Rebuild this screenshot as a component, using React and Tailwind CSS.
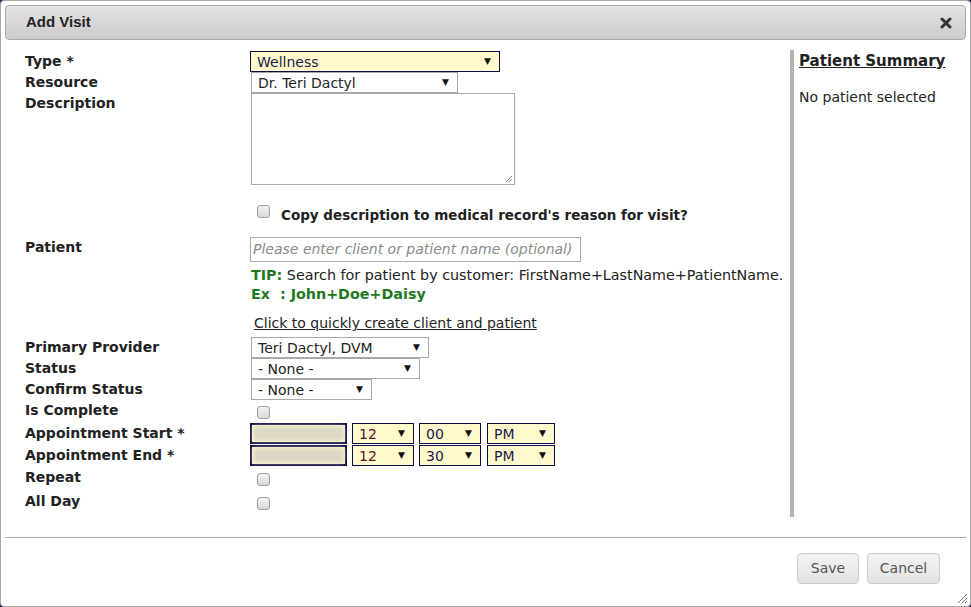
import React from "react";

const font = { fontFamily: '"DejaVu Sans", Verdana, sans-serif' };

function Select({ value, width, yellow, textClass = "" }) {
  return (
    <div
      className={
        "flex items-center justify-between h-[21px] pl-[6px] pr-[8px] text-[14px] leading-none " +
        (yellow
          ? "bg-[#fff9cc] border border-[#0b0b45] text-[#1b1b4f]"
          : "bg-white border border-[#a9a9a9] text-[#222]")
      }
      style={{ width }}
    >
      <span className={textClass}>{value}</span>
      <span className="text-[9px] text-[#111]">▼</span>
    </div>
  );
}

function Check() {
  return (
    <div className="w-[13px] h-[13px] rounded-[3px] border border-[#a0a0a0] bg-gradient-to-b from-[#f2f2f2] to-[#d9d9d9]" />
  );
}

function Row({ label, children, className = "items-center", h }) {
  return (
    <div className={"flex " + className} style={{ height: h }}>
      <div className="w-[225px] shrink-0 font-bold text-[14px] text-[#222] leading-[20px] pb-[2px] whitespace-nowrap">
        {label}
      </div>
      <div className="flex-1">{children}</div>
    </div>
  );
}

function DateBox() {
  return (
    <div className="w-[97px] h-[21px] bg-[#fff9cc] border-2 border-[#0b0b45] flex items-center p-[1px]">
      <div className="w-full h-full bg-[#dcd8c4] blur-[2px]" />
    </div>
  );
}

function TimeRow({ min }) {
  return (
    <div className="flex gap-[5px]">
      <DateBox />
      <Select value="12" width={62} yellow textClass="text-[#5a1030]" />
      <Select value={min} width={62} yellow />
      <div className="ml-[1px]">
        <Select value="PM" width={68} yellow />
      </div>
    </div>
  );
}

export default function App() {
  return (
    <div className="w-[971px] h-[607px] bg-[#1c2654]" style={font}>
      <div className="w-[971px] h-[607px] bg-white border border-[#a6a6a6] rounded-[4px] flex flex-col relative">
        {/* title bar */}
        <div className="mx-[4px] mt-[4px] h-[35px] rounded-[4px] border border-[#aaaaaa] bg-gradient-to-b from-[#e4e4e4] to-[#cbcbcb] flex items-center justify-between pl-[20px] pr-[13px]">
          <span className="font-bold text-[15px] text-[#222]" style={{ fontFamily: '"Liberation Sans", Arial, sans-serif' }}>
            Add Visit
          </span>
          <svg width="12" height="12" viewBox="0 0 12 12">
            <path d="M2 2 L10 10 M10 2 L2 10" stroke="#333" strokeWidth="3" strokeLinecap="round" />
          </svg>
        </div>

        {/* body */}
        <div className="flex mt-[10px] h-[467px]">
          <div className="w-[789px] pl-[24px] pt-[1px] flex flex-col">
            <Row label="Type *" h={21}>
              <Select value="Wellness" width={250} yellow />
            </Row>
            <Row label="Resource" h={21}>
              <div className="pl-[1px]">
                <Select value="Dr. Teri Dactyl" width={207} />
              </div>
            </Row>
            <Row label="Description" className="items-start" h={92}>
              <div className="pl-[1px]">
                <div className="w-[264px] h-[92px] border border-[#a9a9a9] relative">
                  <svg className="absolute right-[1px] bottom-[1px]" width="8" height="8" viewBox="0 0 8 8">
                    <path d="M7 1 L1 7 M7 4 L4 7" stroke="#888" strokeWidth="1" />
                  </svg>
                </div>
              </div>
            </Row>
            <div className="flex items-start h-[27px] mt-[20px] pl-[232px] gap-[11px]">
              <Check />
              <span className="font-bold text-[13.5px] leading-[20px] text-[#222]">
                Copy description to medical record's reason for visit?
              </span>
            </div>
            <Row label="Patient" className="items-start mt-[5px]" h={25}>
              <div className="w-[331px] h-[25px] border border-[#a9a9a9] flex items-center pl-[2px] text-[14px] italic text-[#8a8a8a] overflow-hidden whitespace-nowrap">
                Please enter client or patient name (optional)
              </div>
            </Row>
            <div className="pl-[226px] mt-[4px] text-[14.3px] leading-[19px]">
              <div className="text-[#222] whitespace-nowrap">
                <span className="font-bold text-[#1f7a1f]">TIP:</span> Search for patient by customer: FirstName+LastName+PatientName.
              </div>
              <div className="font-bold text-[#1f7a1f] whitespace-nowrap">Ex&nbsp;&nbsp;: John+Doe+Daisy</div>
            </div>
            <div className="pl-[229px] mt-[10px] text-[14px] leading-[19px] text-[#222] underline">
              Click to quickly create client and patient
            </div>
            <div className="mt-[4px]">
              <Row label="Primary Provider" h={21}>
                <div className="pl-[1px]">
                  <Select value="Teri Dactyl, DVM" width={178} />
                </div>
              </Row>
              <Row label="Status" h={21}>
                <div className="pl-[1px]">
                  <Select value="- None -" width={169} />
                </div>
              </Row>
              <Row label="Confirm Status" h={21}>
                <div className="pl-[1px]">
                  <Select value="- None -" width={121} />
                </div>
              </Row>
              <Row label="Is Complete" h={21}>
                <div className="pl-[7px] pt-[3px]">
                  <Check />
                </div>
              </Row>
              <div className="h-[2px]" />
              <Row label="Appointment Start *" h={21}>
                <TimeRow min="00" />
              </Row>
              <div className="h-[1px]" />
              <Row label="Appointment End *" h={21}>
                <TimeRow min="30" />
              </Row>
              <Row label="Repeat" className="items-center mt-[1px]" h={22}>
                <div className="pl-[7px] pt-[2px]">
                  <Check />
                </div>
              </Row>
              <Row label="All Day" className="items-center mt-[2px]" h={22}>
                <div className="pl-[7px] pt-[2px]">
                  <Check />
                </div>
              </Row>
            </div>
          </div>
          <div className="w-[4px] bg-[#b3b3b3]" />
          <div className="pl-[5px] pt-[1px]">
            <div className="font-bold text-[15px] text-[#222] underline leading-[20px]">Patient Summary</div>
            <div className="text-[14px] text-[#222] mt-[16px]">No patient selected</div>
          </div>
        </div>

        {/* footer */}
        <div className="mx-[4px] mt-[20px] border-t border-[#aaaaaa]" />
        <div className="flex justify-end gap-[8px] pr-[30px] mt-[15px]">
          <button className="w-[62px] h-[31px] rounded-[4px] border border-[#cccccc] bg-gradient-to-b from-[#f4f4f4] to-[#e2e2e2] text-[14px] text-[#555]">
            Save
          </button>
          <button className="w-[73px] h-[31px] rounded-[4px] border border-[#cccccc] bg-gradient-to-b from-[#f4f4f4] to-[#e2e2e2] text-[14px] text-[#555]">
            Cancel
          </button>
        </div>
        <svg className="absolute right-[2px] bottom-[2px]" width="12" height="12" viewBox="0 0 12 12">
          <path d="M11 2 L2 11 M11 6 L6 11 M11 9 L9 11" stroke="#777" strokeWidth="1" />
        </svg>
      </div>
    </div>
  );
}
